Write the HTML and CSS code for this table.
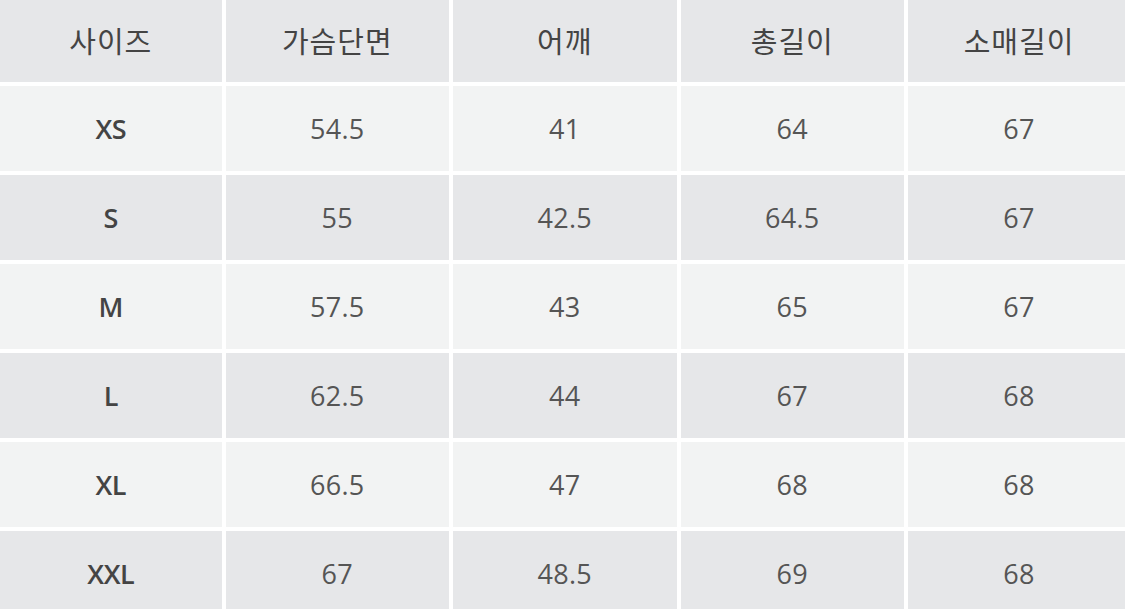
FILE: index.html
```html
<!DOCTYPE html>
<html lang="ko">
<head>
<meta charset="utf-8">
<link rel="stylesheet" href="styles.css">
</head>
<body>
<div class="table">
  <div class="cell head">사이즈</div>
  <div class="cell head">가슴단면</div>
  <div class="cell head">어깨</div>
  <div class="cell head">총길이</div>
  <div class="cell head">소매길이</div>

  <div class="cell odd size">XS</div>
  <div class="cell odd">54.5</div>
  <div class="cell odd">41</div>
  <div class="cell odd">64</div>
  <div class="cell odd">67</div>

  <div class="cell even size">S</div>
  <div class="cell even">55</div>
  <div class="cell even">42.5</div>
  <div class="cell even">64.5</div>
  <div class="cell even">67</div>

  <div class="cell odd size">M</div>
  <div class="cell odd">57.5</div>
  <div class="cell odd">43</div>
  <div class="cell odd">65</div>
  <div class="cell odd">67</div>

  <div class="cell even size">L</div>
  <div class="cell even">62.5</div>
  <div class="cell even">44</div>
  <div class="cell even">67</div>
  <div class="cell even">68</div>

  <div class="cell odd size">XL</div>
  <div class="cell odd">66.5</div>
  <div class="cell odd">47</div>
  <div class="cell odd">68</div>
  <div class="cell odd">68</div>

  <div class="cell even size">XXL</div>
  <div class="cell even">67</div>
  <div class="cell even">48.5</div>
  <div class="cell even">69</div>
  <div class="cell even">68</div>
</div>
</body>
</html>
```

FILE: styles.css
```css
html, body {
  margin: 0;
  padding: 0;
  background: #ffffff;
  overflow: hidden;
}
body {
  width: 1125px;
  height: 609px;
  font-family: "Open Sans", "Noto Sans CJK KR", sans-serif;
}
.table {
  display: grid;
  grid-template-columns: 221.5px 222.5px 223.5px 222.5px 222px;
  grid-template-rows: 81.5px repeat(6, 84.5px);
  column-gap: 4.5px;
  row-gap: 4.5px;
}
.cell {
  display: flex;
  align-items: center;
  justify-content: center;
  font-size: 27px;
  color: #555555;
  letter-spacing: 0.3px;
}
.head {
  background: #e6e7e9;
  color: #444444;
  font-family: "Noto Sans CJK KR", sans-serif;
  font-size: 29px;
  font-weight: 400;
  letter-spacing: 1px;
  padding-bottom: 2px;
}
.odd {
  background: #f2f3f3;
}
.even {
  background: #e6e7e9;
}
.size {
  font-weight: 600;
  color: #444444;
  letter-spacing: -0.5px;
}
```
